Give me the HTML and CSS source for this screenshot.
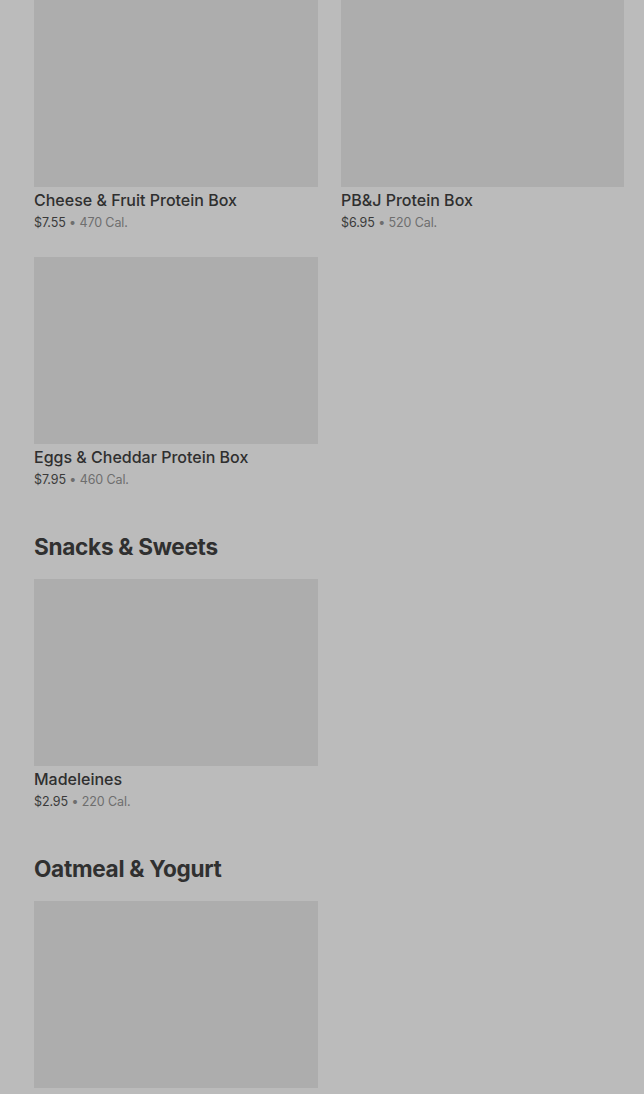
FILE: index.html
```html
<!DOCTYPE html>
<html>
<head>
<meta charset="utf-8">
<link rel="stylesheet" href="styles.css">
</head>
<body>
<main class="menu">
  <section class="section">
    <div class="grid">
      <div class="card">
        <div class="thumb"></div>
        <div class="name">Cheese &amp; Fruit Protein Box</div>
        <div class="meta"><span class="price">$7.55</span> • 470 Cal.</div>
      </div>
      <div class="card">
        <div class="thumb"></div>
        <div class="name">PB&amp;J Protein Box</div>
        <div class="meta"><span class="price">$6.95</span> • 520 Cal.</div>
      </div>
      <div class="card">
        <div class="thumb"></div>
        <div class="name">Eggs &amp; Cheddar Protein Box</div>
        <div class="meta"><span class="price">$7.95</span> • 460 Cal.</div>
      </div>
    </div>
  </section>
  <section class="section">
    <h2 class="heading">Snacks &amp; Sweets</h2>
    <div class="grid">
      <div class="card">
        <div class="thumb"></div>
        <div class="name">Madeleines</div>
        <div class="meta"><span class="price">$2.95</span> • 220 Cal.</div>
      </div>
    </div>
  </section>
  <section class="section">
    <h2 class="heading">Oatmeal &amp; Yogurt</h2>
    <div class="grid">
      <div class="card">
        <div class="thumb"></div>
      </div>
    </div>
  </section>
</main>
</body>
</html>
```
FILE: styles.css
```css
html, body {
  margin: 0;
  padding: 0;
  background: #bbbbbb;
  height: 1094px;
  overflow: hidden;
}
body {
  font-family: Inter, "Liberation Sans", sans-serif;
  color: #2f2f2f;
}
.menu {
  padding: 0 20px 0 34px;
}
.section + .section {
  margin-top: 42px;
}
.heading {
  margin: 0 0 16px;
  font-size: 22.6px;
  line-height: 32px;
  font-weight: 700;
  letter-spacing: -0.3px;
  color: #303030;
}
.grid {
  display: grid;
  grid-template-columns: 284px 283px;
  column-gap: 23px;
  row-gap: 25px;
}
.thumb {
  height: 187px;
  background: #adadad;
}
.name {
  margin-top: 3px;
  font-size: 16px;
  line-height: 20px;
  font-weight: 500;
  color: #2f2f2f;
}
.meta {
  margin-top: 4px;
  font-size: 12.5px;
  line-height: 18px;
  color: #6e6e6e;
  letter-spacing: -0.1px;
}
.price {
  color: #3a3a3a;
}
```
